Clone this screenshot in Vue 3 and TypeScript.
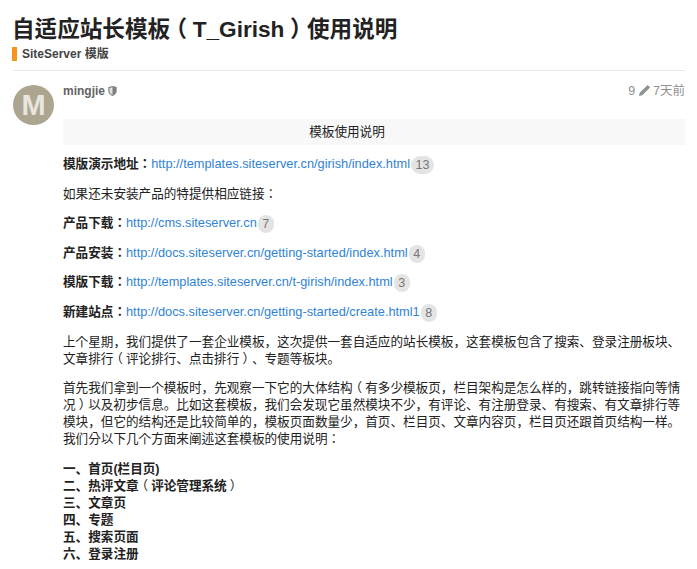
<script setup lang="ts">
interface LinkRow { label: string; url: string; clicks: number }
interface Part { text: string; paren: boolean }
const rows: LinkRow[] = [
  { label: '产品下载：', url: 'http://cms.siteserver.cn', clicks: 7 },
  { label: '产品安装：', url: 'http://docs.siteserver.cn/getting-started/index.html', clicks: 4 },
  { label: '模版下载：', url: 'http://templates.siteserver.cn/t-girish/index.html', clicks: 3 },
  { label: '新建站点：', url: 'http://docs.siteserver.cn/getting-started/create.html1', clicks: 8 },
]
const items = ['一、首页(栏目页)', '二、热评文章（评论管理系统）', '三、文章页', '四、专题', '五、搜索页面', '六、登录注册']
const title = '自适应站长模板（T_Girish）使用说明'
const para1 = '上个星期，我们提供了一套企业模板，这次提供一套自适应的站长模板，这套模板包含了搜索、登录注册板块、文章排行（评论排行、点击排行）、专题等板块。'
const para2 = '首先我们拿到一个模板时，先观察一下它的大体结构（有多少模板页，栏目架构是怎么样的，跳转链接指向等情况）以及初步信息。比如这套模板，我们会发现它虽然模块不少，有评论、有注册登录、有搜索、有文章排行等模块，但它的结构还是比较简单的，模板页面数量少，首页、栏目页、文章内容页，栏目页还跟首页结构一样。我们分以下几个方面来阐述这套模板的使用说明：'
// The reference centres full-width brackets in their em box.
function parts(text: string): Part[] {
  return text.split(/([（）])/).filter(Boolean).map((t) => ({
    text: t,
    paren: t === '（' || t === '）',
  }))
}
</script>

<template>
  <div class="page">
    <header class="head">
      <h1><template v-for="(p, i) in parts(title)" :key="i"><span v-if="p.paren" class="paren">{{ p.text }}</span><template v-else>{{ p.text }}</template></template></h1>
      <div class="cat"><span class="swatch"></span><span class="cat-name">SiteServer 模版</span></div>
    </header>
    <article class="post">
      <div class="avatar">M</div>
      <div class="main">
        <div class="meta">
          <span class="user">mingjie
            <svg class="shield" viewBox="0 0 10 12" width="9" height="10"><path d="M0 1.2 5 0l5 1.2V6c0 3-2.4 5-5 6-2.6-1-5-3-5-6z" fill="#808080"/><path d="M5 1.4v9.2C3 9.7 1.4 8.200 1.400 6V2.300z" fill="#e2e2e2"/></svg>
          </span>
          <span class="info">9
            <svg class="pencil" viewBox="0 0 12 12" width="11" height="11"><path d="M0 12l.8-3.500L8 1.300 10.700 4 3.500 11.200zM8.800.5l.7-.5L12 2.500l-.5.700-.8.800L8 1.300z" fill="#919191"/></svg>
            7天前</span>
        </div>
        <div class="title-box">模板使用说明</div>
        <p><b>模版演示地址：</b><a>http://templates.siteserver.cn/girish/index.html</a><span class="badge">13</span></p>
        <p>如果还未安装产品的特提供相应链接：</p>
        <p v-for="r in rows" :key="r.url"><b>{{ r.label }}</b><a>{{ r.url }}</a><span class="badge">{{ r.clicks }}</span></p>
        <p><template v-for="(p, i) in parts(para1)" :key="i"><span v-if="p.paren" class="paren">{{ p.text }}</span><template v-else>{{ p.text }}</template></template></p>
        <p><template v-for="(p, i) in parts(para2)" :key="i"><span v-if="p.paren" class="paren">{{ p.text }}</span><template v-else>{{ p.text }}</template></template></p>
        <p class="list"><b v-for="item in items" :key="item"><template v-for="(p, i) in parts(item)" :key="i"><span v-if="p.paren" class="paren">{{ p.text }}</span><template v-else>{{ p.text }}</template></template></b></p>
      </div>
    </article>
  </div>
</template>

<style>
html, body { margin: 0; background: #fff; overflow: hidden; }
</style>

<style scoped>
.page {
  height: 569px;
  overflow: hidden;
  padding: 0 12px 0 13px;
  font-family: "Liberation Sans", "Noto Sans CJK KR", sans-serif;
  color: #222;
  font-size: 12.6px;
  line-height: 17px;
  text-spacing-trim: space-all;
}
.paren { font-feature-settings: "halt"; padding: 0 0.25em; font-weight: 400; }
.head { padding-top: 14px; padding-bottom: 9px; border-bottom: 1px solid #e9e9e9; }
h1 { margin: 0 0 0 -1px; font-size: 22.6px; line-height: 32px; font-weight: 700; color: #222; }
h1 .paren { font-weight: 700; }
.cat { display: flex; align-items: center; height: 14px; margin-top: 1px; margin-left: -1px; }
.swatch { width: 5px; height: 14px; background: #f7941d; margin-right: 5px; }
.cat-name { font-size: 12px; font-weight: 700; color: #444; }
.post { display: flex; gap: 9px; padding-top: 14px; }
.avatar {
  width: 41px; height: 40px; border-radius: 50%; background: #aca58f; color: #e8e6df;
  font-size: 29px; font-weight: 700; line-height: 40px; text-align: center; flex: none;
}
.main { flex: 1; min-width: 0; }
.meta { display: flex; justify-content: space-between; height: 24px; margin-top: -2px; }
.user { font-size: 12px; font-weight: 700; color: #646464; }
.shield { vertical-align: -1px; }
.info { color: #919191; font-size: 12.5px; }
.pencil { vertical-align: -1px; }
.title-box { background: #f8f8f8; text-align: center; height: 26px; line-height: 26px; margin-top: 12px; padding-right: 54px; }
p { margin: 12.6px 0 0; }
.title-box + p { margin-top: 11px; }
a { color: #2f83d6; font-size: 12.8px; line-height: 1; }
.badge {
  display: inline-block; min-width: 7px; height: 18px; line-height: 18px; padding: 0 4.500px; margin: -4px 0 -4px 1px;
  border-radius: 9px; background: #e4e4e4; color: #777; font-size: 12.500px; text-align: center; vertical-align: -1px;
}
.list b { display: block; }
</style>
